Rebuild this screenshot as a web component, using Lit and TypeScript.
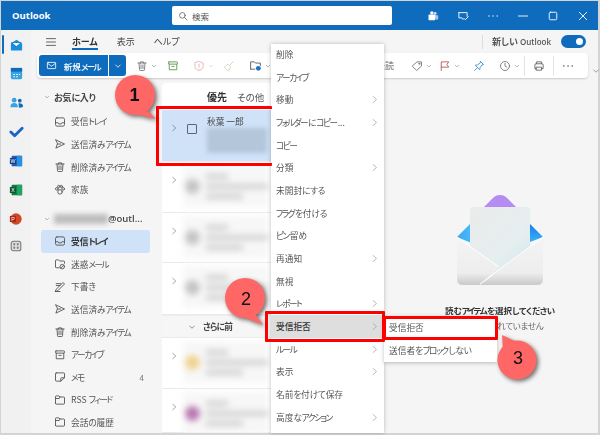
import { LitElement, html, svg, css } from "lit";
import { customElement } from "lit/decorators.js";

const ic = (body: unknown, size = 12, color = "#555", vb = 16) => html`<svg class="ic" width=${size} height=${size} viewBox="0 0 ${vb} ${vb}" fill="none" stroke=${color} stroke-width="1.2" stroke-linecap="round" stroke-linejoin="round">${body}</svg>`;

// The reference face has narrow kana; tighten kana runs so that widths agree.
const T = (s: string) =>
  s.split(/([\u30A0-\u30FF]+|[\u3040-\u309F]+)/).filter(Boolean).map((r) =>
    /^[\u30A0-\u30FF]/.test(r) ? html`<span class="k">${r}</span>`
    : /^[\u3040-\u309F]/.test(r) ? html`<span class="h">${r}</span>` : r);

const P = {
  inbox: svg`<rect x="2" y="2.5" width="12" height="11" rx="2"/><path d="M2.5 9h3l1 1.6h3l1-1.6h3"/>`,
  send: svg`<path d="M2.5 2.5 14 8 2.5 13.5 4.5 8zM4.5 8H9"/>`,
  trash: svg`<path d="M2.5 4h11M6 4V2.5h4V4M4 4l.7 9a1 1 0 0 0 1 1h4.6a1 1 0 0 0 1-1L12 4M6.7 6.5v5M9.3 6.5v5"/>`,
  family: svg`<circle cx="8" cy="10.5" r="3"/><circle cx="3.8" cy="6.5" r="1.8"/><circle cx="12.2" cy="6.5" r="1.8"/><circle cx="6.3" cy="3.2" r="1.5"/><circle cx="9.7" cy="3.2" r="1.5"/>`,
  spam: svg`<path d="M7 13H3a1 1 0 0 1-1-1V3.5a1 1 0 0 1 1-1h3l1.5 1.5H13a1 1 0 0 1 1 1V7"/><circle cx="11" cy="11.5" r="3"/><path d="m9 13.5 4-4"/>`,
  draft: svg`<path d="M2 14h6M3 11 12 2l2 2-9 9-3 1zM3 6h5M3 3.5h6"/>`,
  archive: svg`<rect x="2" y="2.5" width="12" height="3" rx=".8"/><path d="M3 5.5V13h10V5.5M6.5 8.5h3"/>`,
  note: svg`<path d="M3 2.5h10a1 1 0 0 1 1 1V9l-5 4.5H3a1 1 0 0 1-1-1v-9a1 1 0 0 1 1-1zM14 9h-4a1 1 0 0 0-1 1v3.500"/>`,
  folder: svg`<path d="M2 12.500v-9a1 1 0 0 1 1-1h3.500L8 4h5a1 1 0 0 1 1 1v7.500a1 1 0 0 1-1 1H3a1 1 0 0 1-1-1zM2 6h5l1-2"/>`,
};

const chev = (c = "#777", s = 7) => ic(svg`<path d="m3.500 6 4.500 4.500L12.500 6" stroke-width="1.600"/>`, s, c);
const right = (c = "#888", s = 10) => ic(svg`<path d="m5.500 2.500 6 5.500-6 5.500"/>`, s, c);

const favs: [string, unknown][] = [
  ["受信トレイ", P.inbox],
  ["送信済みアイテム", P.send],
  ["削除済みアイテム", P.trash],
  ["家族", P.family],
];
const folders: [string, unknown, string?][] = [
  ["受信トレイ", P.inbox],
  ["迷惑メール", P.spam],
  ["下書き", P.draft],
  ["送信済みアイテム", P.send],
  ["削除済みアイテム", P.trash],
  ["アーカイブ", P.archive],
  ["メモ", P.note, "4"],
  ["RSS フィード", P.folder],
  ["会話の履歴", P.folder],
];
const menu: [string, boolean][] = [
  ["削除", false], ["アーカイブ", false], ["移動", true], ["フォルダーにコピー...", true], ["コピー", false],
  ["分類", true], ["未開封にする", false], ["フラグを付ける", false], ["ピン留め", false], ["再通知", true],
  ["無視", false], ["レポート", true], ["受信拒否", true], ["ルール", true], ["表示", true],
  ["名前を付けて保存", false], ["高度なアクション", true],
];
const mails = [
  { h: 51, c: "#c4c4c4" }, { h: 50, c: "#c4c4c4" }, { h: 52, c: "#c4c4c4" },
  { h: 23, band: true, c: "" },
  { h: 51, c: "#f0d391" }, { h: 44, c: "#b777b0" },
];

@customElement("app-root")
export class AppRoot extends LitElement {
  static styles = css`
    :host { display: block; position: relative; width: 600px; height: 435px; overflow: hidden; background: #d4d4d4; font-family: "Noto Sans CJK JP", "Noto Sans", sans-serif; font-size: 8.700px; color: #4a4a4a; font-feature-settings: "palt"; }
    * { box-sizing: border-box; }
    .k { letter-spacing: -1.500px; margin-right: 1px; }
    .h { letter-spacing: -.3px; }
    .ic { display: block; flex: none; }
    .win { position: absolute; inset: 1px 2px 2px 1px; display: flex; flex-direction: column; background: #f5f5f5; filter: blur(.35px); }
    .title { height: 29px; flex: none; background: #0f6cbd; display: flex; align-items: center; color: #fff; padding: 0 9px 0 11px; }
    .brand { width: 160px; font: 700 9.500px "Open Sans", sans-serif; }
    .search { width: 220px; height: 19px; background: #fff; border-radius: 2px; display: flex; align-items: center; gap: 4px; padding-left: 6px; color: #555; font-size: 8.500px; }
    .tright { flex: 1; display: flex; justify-content: flex-end; align-items: center; gap: 18.100px; }
    .main { flex: 1; display: flex; min-height: 0; }
    .rail { width: 30px; flex: none; background: #f1f1f1; display: flex; flex-direction: column; align-items: center; position: relative; }
    .rail .active { position: absolute; left: 1px; top: 5px; width: 2px; height: 19px; background: #0f6cbd; border-radius: 1px; }
    .rail-i { height: 29px; display: flex; align-items: center; justify-content: center; }
    .rail-i.apps { height: 26px; }
    .content { flex: 1; display: flex; flex-direction: column; min-width: 0; }
    .tabs { height: 23px; flex: none; display: flex; align-items: center; padding: 0 12px 0 14px; font-size: 9px; }
    .tab { position: relative; margin-right: 19px; color: #444; }
    .tab.on { font-weight: 700; color: #333; }
    .tab.on::after { content: ""; position: absolute; left: 0; right: 0; bottom: -2px; height: 2px; background: #0f6cbd; }
    .burger { margin-right: 15px; }
    .newo { margin-left: auto; display: flex; align-items: center; gap: 10px; border-left: 1px solid #ddd; padding-left: 9px; font-weight: 700; color: #555; height: 14px; }
    .newo b { font: 600 8px "Open Sans", sans-serif; }
    .toggle { width: 25px; height: 13px; border-radius: 7px; background: #0f6cbd; position: relative; }
    .toggle::after { content: ""; position: absolute; right: 3px; top: 3px; width: 7px; height: 7px; border-radius: 50%; background: #fff; }
    .tb { height: 25px; flex: none; margin: 0 10px 0 6px; background: #fff; border-radius: 4px; box-shadow: 0 1px 2px rgba(0,0,0,.18); display: flex; align-items: center; padding-left: 2px; position: relative; }
    .btn { height: 21px; width: 87px; background: #0f6cbd; border-radius: 3px; color: #fff; display: flex; align-items: center; flex: none; }
    .btn .l { width: 70px; display: flex; align-items: center; justify-content: center; gap: 7px; height: 100%; border-right: 1px solid #fff; font-size: 8.500px; font-weight: 500; }
    .btn .r { flex: 1; display: flex; justify-content: center; }
    .tbi { display: flex; align-items: center; gap: 3px; flex: none; }
    .tbi.m8 { margin-left: 8px; } .tbi.m9 { margin-left: 9px; } .tbi.m10 { margin-left: 10px; }
    .tbi.m7 { margin-left: 7px; } .tbi.m13 { margin-left: 13px; } .tbi.m14 { margin-left: 14px; } .tbi.m17 { margin-left: 17px; }
    .unread { margin-left: 101px; font-size: 9px; color: #666; width: 22px; text-align: right; }
    .tdiv { width: 1px; height: 20px; background: #e4e4e4; flex: none; margin-left: 8px; }
    .tdiv.a { margin-left: 4px; }
    .more { position: absolute; left: 555px; top: 14px; }
    .body { flex: 1; display: flex; min-height: 0; }
    .side { width: 131px; flex: none; padding-top: 8px; }
    .sh { height: 22.600px; display: flex; align-items: center; gap: 4px; padding-left: 13px; font-weight: 700; font-size: 9px; color: #444; margin-bottom: 2px; }
    .acct { margin-top: 6.400px; margin-bottom: 0; }
    .acct i { display: block; width: 54px; height: 10px; background: #bdbdbd; filter: blur(2.500px); margin-left: 0; }
    .acct span { margin-left: -4px; font: 600 9.500px "Open Sans", sans-serif; color: #444; }
    .si { height: 22.600px; margin-left: 10px; margin-right: 12px; padding: 0 6px 0 13px; display: flex; align-items: center; gap: 5px; border-radius: 3px; color: #555; }
    .si.on { background: #cfe2f8; font-weight: 700; color: #333; height: 23px; }
    .si em { margin-left: auto; font-style: normal; font-size: 8px; color: #777; }
    .list { width: 218px; flex: none; margin-top: 5px; background: #fff; border-radius: 4px 4px 0 0; display: flex; flex-direction: column; overflow: hidden; }
    .lh { height: 27px; flex: none; display: flex; align-items: center; padding-left: 45px; gap: 10px; color: #555; font-size: 9.500px; }
    .lh b { color: #333; font-size: 10px; }
    .row { display: flex; flex: none; border-bottom: 1px solid #eaeaea; position: relative; }
    .row .cv { position: absolute; left: 8px; top: 14px; }
    .sel { height: 52px; background: #cfe2f8; align-items: flex-start; }
    .sel .box { position: absolute; left: 25px; top: 14px; width: 10px; height: 10px; border: 1px solid #5d6670; border-radius: 1px; }
    .sel .nm { position: absolute; left: 45px; top: 5px; color: #444; }
    .sel .bl { position: absolute; left: 45px; top: 18px; width: 60px; height: 25px; background: #b3c6da; filter: blur(2px); }
    .blur { position: absolute; left: 21px; top: 3px; width: 85px; height: 42px; filter: blur(3px); display: flex; gap: 6px; align-items: center; background: #f7f7f7; }
    .av { width: 15px; height: 15px; border-radius: 50%; flex: none; margin-left: 2px; }
    .lines { flex: 1; display: flex; flex-direction: column; gap: 5px; }
    .lines i { display: block; height: 5px; background: #cfcfcf; }
    .lines .s { width: 35%; } .lines .m { width: 60%; }
    .band { background: #f6f6f6; align-items: center; padding-left: 26px; gap: 7px; font-weight: 700; color: #444; border-top: 1px solid #eee; letter-spacing: -.8px; }
    .read { flex: 1; display: flex; flex-direction: column; align-items: center; padding: 117px 0 0 22px; }
    .read b { margin-top: 19px; font-size: 8.500px; color: #333; line-height: 13px; }
    .read span.t { font-size: 8.500px; color: #666; line-height: 13px; margin-top: 2px; }
    .menu { position: absolute; left: 271px; top: 44px; width: 113px; height: 389px; background: #fff; box-shadow: 0 0 4px rgba(0,0,0,.25); display: flex; flex-direction: column; filter: blur(.35px); }
    .mi { height: 22.700px; flex: none; display: flex; align-items: center; justify-content: space-between; padding: 0 5px; color: #555; }
    .mi.first { margin-top: -1px; }
    .mi.hot { background: #dedede; color: #333; font-weight: 500; margin-right: 2px; padding-right: 3px; }
    .sub { position: absolute; left: 384px; top: 316px; width: 113px; height: 46px; background: #fff; box-shadow: 0 1px 4px rgba(0,0,0,.25); filter: blur(.35px); }
    .sub div { height: 23px; display: block; line-height: 23px; padding-left: 5px; color: #555; }
    .red { position: absolute; border: 3px solid #f00; border-radius: 1px; }
    .r1 { left: 156px; top: 106px; width: 116px; height: 60px; border-right: none; }
    .r2 { left: 265px; top: 311px; width: 120px; height: 31px; }
    .r3 { left: 383px; top: 316px; width: 115px; height: 24px; }
    .notes { position: absolute; inset: 0; filter: drop-shadow(2px 2px 2px rgba(0,0,0,.55)); }
    .notes text { font: 400 18px "Liberation Sans", sans-serif; fill: #111; text-anchor: middle; }
    .notes text.b { font-weight: 700; }
  `;

  private railIcons() {
    return [
      svg`<path d="M2 7 8 3l6 4v6.500a1 1 0 0 1-1 1H3a1 1 0 0 1-1-1z" fill="#1490df" stroke="none"/><path d="M3 6h10L8 10z" fill="#fff" stroke="#0f6cbd" stroke-width=".8"/>`,
      svg`<rect x="2" y="2" width="12" height="12" rx="1.500" fill="#36a2e2" stroke="none"/><rect x="2" y="2" width="12" height="4" fill="#0f6cbd" stroke="none"/><path d="M5 9h1M8 9h1M11 9h.5M5 11.500h1M8 11.500h1" stroke="#fff" stroke-width="1"/>`,
      svg`<circle cx="5.500" cy="5.500" r="2.500" fill="#36a2e2" stroke="none"/><circle cx="11.500" cy="6" r="2" fill="#0f6cbd" stroke="none"/><path d="M1.500 13c0-3 1.500-4.500 4-4.500s4 1.500 4 4.500z" fill="#36a2e2" stroke="none"/><path d="M10.500 13.500c0-2 0-3-.5-4.500 2.500-.5 5 .5 5 3 0 1-1 1.500-4.500 1.500z" fill="#0f6cbd" stroke="none"/>`,
      svg`<path d="m2 8.500 4 4L14 4.500" stroke="#1b63c5" stroke-width="3"/>`,
    ];
  }

  render() {
    const office = [
      ["#1c5fb8", "W", "rect"], ["#107c41", "X", "rect"], ["#d24726", "P", "circle"],
    ];
    return html`
      <div class="win">
        <div class="title">
          <div class="brand">Outlook</div>
          <div class="search">${ic(svg`<circle cx="7" cy="7" r="4.500"/><path d="m10.500 10.500 4 4"/>`, 10, "#555")}<span>検索</span></div>
          <div class="tright">
            ${ic(svg`<circle cx="11" cy="4.500" r="1.800" fill="#cfe3f5" stroke="none"/><path d="M10 7h5v4a2 2 0 0 1-4 0z" fill="#9cc6ea" stroke="none"/><circle cx="6.500" cy="3.800" r="2.300" fill="#fff" stroke="none"/><rect x="2" y="6" width="9" height="7.500" rx="1" fill="#fff" stroke="none"/>`, 12, "#fff")}
            ${ic(svg`<path d="M2.500 3.500h11v5M2.500 3.500v7h4l1.500 2M9 11l2 2 4-4" />`, 12, "#fff")}
            ${ic(svg`<path d="M2.500 8h.1M8 8h.1M13.500 8h.1" stroke-width="1.800"/>`, 12, "#e6f0f9")}
            ${ic(svg`<path d="M2 8h12"/>`, 12, "#fff")}
            ${ic(svg`<rect x="3" y="3" width="10" height="10" rx="1.500"/>`, 12, "#fff")}
            ${ic(svg`<path d="m3 3 10 10M13 3 3 13"/>`, 12, "#fff")}
          </div>
        </div>
        <div class="main">
          <div class="rail">
            <div class="active"></div>
            ${this.railIcons().map((b) => html`<div class="rail-i">${ic(b, 15)}</div>`)}
            ${office.map(([c, l, k]) => html`<div class="rail-i">
              ${ic(k === "circle"
                ? svg`<circle cx="8" cy="8" r="6.500" fill=${c} stroke="none"/><rect x="1" y="4.500" width="7" height="7" fill="#a92b14" stroke="none"/><text x="4.500" y="10.500" font-size="6" font-family="Liberation Sans" fill="#fff" stroke="none" text-anchor="middle">${l}</text>`
                : svg`<rect x="3" y="2" width="12" height="12" rx="1" fill=${c} stroke="none"/><rect x="9" y="2" width="6" height="12" fill=${c === "#107c41" ? "#21a366" : "#2b8fe0"} stroke="none"/><rect x="1" y="4.500" width="7" height="7" fill=${c === "#107c41" ? "#0b5a2f" : "#123f8c"} stroke="none"/><text x="4.500" y="10.500" font-size="6" font-family="Liberation Sans" fill="#fff" stroke="none" text-anchor="middle">${l}</text>`, 14)}
            </div>`)}
            <div class="rail-i apps">${ic(svg`<rect x="2.500" y="2.500" width="11" height="11" rx="2.500" fill="#ddd" stroke="#777"/><circle cx="6" cy="6" r="1.300" fill="#888" stroke="none"/><circle cx="10" cy="6" r="1.300" fill="#888" stroke="none"/><circle cx="6" cy="10" r="1.300" fill="#888" stroke="none"/><circle cx="10" cy="10" r="1.300" fill="#888" stroke="none"/>`, 14)}</div>
          </div>
          <div class="content">
            <div class="tabs">
              <span class="burger">${ic(svg`<path d="M2 3.500h12M2 8h12M2 12.500h12"/>`, 12, "#555")}</span>
              <span class="tab on">ホーム</span><span class="tab">表示</span><span class="tab">ヘルプ</span>
              <div class="newo"><span>新しい <b>Outlook</b></span><div class="toggle"></div></div>
            </div>
            <div class="tb">
              <div class="btn"><div class="l">${ic(svg`<rect x="2" y="3.500" width="12" height="9" rx="1"/><path d="m2.500 5 5.500 4 5.500-4"/>`, 11, "#fff")}<span>${T("新規メール")}</span></div><div class="r">${chev("#fff", 8)}</div></div>
              <div class="tbi m10">${ic(P.trash, 12, "#777")}${chev("#888", 6)}</div>
              <div class="tbi m10">${ic(P.archive, 12, "#5a9a4a")}</div>
              <div class="tbi m14">${ic(svg`<path d="M8 2 13.500 4v4.500c0 3-2.500 4.800-5.500 5.500-3-.7-5.500-2.500-5.500-5.500V4zM8 5.500v3.500M8 11v.1"/>`, 12, "#e8b0b0")}${chev("#ccc", 6)}</div>
              <div class="tbi m9">${ic(svg`<path d="m14 2-5 5M7 6l3 3-2 5c-2 0-5-2-6-4z"/>`, 12, "#d8d0c0")}</div>
              <div class="tbi m14">${ic(svg`<path d="M2 12.500v-9h4.500L8 5h6v3" stroke="#666"/><path d="M2 12.500h5"  stroke="#666"/><circle cx="11.500" cy="11.500" r="3" fill="#1a73c7" stroke="none"/>`, 13, "#666")}${chev("#888", 6)}</div>
              <span class="unread">未読</span>
              <div class="tbi m17">${ic(svg`<path d="M8.500 2.500H14v5.500l-6.500 6-5.500-5.500z"/><circle cx="11" cy="5" r=".8"/>`, 12, "#777")}${chev("#888", 6)}</div>
              <div class="tbi m7">${ic(svg`<path d="M3 14V2.500h10L10.500 6 13 9.500H3"/>`, 12, "#c4505a")}${chev("#888", 6)}</div>
              <div class="tbi m13">${ic(svg`<path d="M10 2 14 6l-2 .5L9.500 10 9 13 3 7l3-.5L9.500 4zM6 10l-4 4"/>`, 12, "#3a96dd")}</div>
              <div class="tbi m14">${ic(svg`<circle cx="8" cy="8" r="6"/><path d="M8 4.500V8l2.500 1.500"/>`, 12, "#777")}${chev("#888", 6)}</div>
              <div class="tdiv a"></div>
              <div class="tbi m8">${ic(svg`<path d="M4.500 5V2.500h7V5M4.500 11.500H2.500V6.500a1.500 1.500 0 0 1 1.500-1.500h8a1.500 1.500 0 0 1 1.500 1.500v5h-2M4.500 9.500h7V13.500h-7z"/>`, 12, "#666")}</div>
              <div class="tdiv"></div>
              <div class="tbi m8">${ic(svg`<path d="M2.500 8h.1M8 8h.1M13.500 8h.1" stroke-width="1.800"/>`, 12, "#444")}</div>
              <div class="more">${chev("#888", 8)}</div>
            </div>
            <div class="body">
              <div class="side">
                <div class="sh">${chev("#888", 6)}<span>${T("お気に入り")}</span></div>
                ${favs.map(([t, p]) => html`<div class="si">${ic(p, 12, "#555")}<span>${T(t)}</span></div>`)}
                <div class="sh acct">${chev("#888", 6)}<i></i><span>@outl...</span></div>
                ${folders.map(([t, p, n], i) => html`<div class="si ${i === 0 ? "on" : ""}">${ic(p, 12, "#555")}<span>${T(t)}</span>${n ? html`<em>${n}</em>` : ""}</div>`)}
              </div>
              <div class="list">
                <div class="lh"><b>優先</b><span>その他</span></div>
                <div class="row sel">
                  <span class="cv">${right("#666", 8)}</span><span class="box"></span><span class="nm">秋葉 一郎</span><span class="bl"></span>
                </div>
                ${mails.map((m) => m.band
                  ? html`<div class="row band" style="height:${m.h}px">${chev("#777", 8)}<span>さらに前</span></div>`
                  : html`<div class="row" style="height:${m.h}px"><span class="cv">${right("#666", 8)}</span>
                      <div class="blur"><div class="av" style="background:${m.c}"></div><div class="lines"><i class="s"></i><i></i><i class="m"></i></div></div></div>`)}
              </div>
              <div class="read">
                <svg width="86" height="90" viewBox="0 0 86 90">
                  <defs>
                    <linearGradient id="pg" x1="0" y1="0" x2="1" y2="1"><stop offset="0" stop-color="#eaeaea"/><stop offset=".6" stop-color="#e6eeef"/><stop offset="1" stop-color="#d3e9ef"/></linearGradient>
                    <linearGradient id="bl" x1="0" y1="0" x2="1" y2="0"><stop offset="0" stop-color="#3aa8f5"/><stop offset="1" stop-color="#56c6f8"/></linearGradient>
                    <linearGradient id="br" x1="0" y1="0" x2="0" y2="1"><stop offset="0" stop-color="#1678ec"/><stop offset="1" stop-color="#45c2f7"/></linearGradient>
                    <linearGradient id="bf" x1="0" y1="0" x2="0" y2="1"><stop offset="0" stop-color="#f4f4f4"/><stop offset=".75" stop-color="#ededed"/><stop offset="1" stop-color="#c9c9c9"/></linearGradient>
                  </defs>
                  <path d="M43 0q4 0 6 2l10 10v6H27v-6L37 2q2-2 6-2z" fill="#b48cf2"/>
                  <path d="M0 42 14 28h10v24z" fill="url(#bl)"/>
                  <path d="M86 42 72 28H60v24z" fill="url(#br)"/>
                  <rect x="13" y="12" width="60" height="68" rx="4" fill="url(#pg)"/>
                  <path d="M0 42 42 72 23 90H6q-6 0-6-6z" fill="url(#bf)"/>
                  <path d="M86 42 V84 Q86 90 80 90 H23 z" fill="url(#bf)"/>
                  <path d="M0 42 42 72" stroke="#fff" stroke-width="1" fill="none"/>
                  <path d="M86 42 23 89" stroke="#fff" stroke-width="1" fill="none"/>
                </svg>
                <b>${T("読むアイテムを選択してください")}</b>
                <span class="t">${T("何も選択されていません")}</span>
              </div>
            </div>
          </div>
        </div>
      </div>

      <div class="menu">
        ${menu.map(([t, a], i) => html`<div class="mi ${i === 0 ? "first" : ""} ${t === "受信拒否" ? "hot" : ""}"><span>${T(t)}</span>${a ? right("#999", 9) : ""}</div>`)}
      </div>
      <div class="sub"><div>${T("受信拒否")}</div><div>${T("送信者をブロックしない")}</div></div>

      <div class="red r1"></div>
      <div class="red r2"></div>
      <div class="red r3"></div>

      <svg class="notes" width="600" height="435" viewBox="0 0 600 435">
        <path d="M148 111 156 119 138 114.800z" fill="#ff6666"/>
        <circle cx="135" cy="95" r="20" fill="#ff6666"/>
        <text class="b" x="134.500" y="100.500">1</text>
        <path d="M255 314 263 325 243 317z" fill="#ff6666"/>
        <circle cx="245" cy="298" r="20" fill="#ff6666"/>
        <text x="246" y="304.500">2</text>
        <path d="M503 350 502 335 519 343z" fill="#ff6666"/>
        <circle cx="517" cy="360" r="19.500" fill="#ff6666"/>
        <text x="518" y="363.500">3</text>
      </svg>
    `;
  }
}
